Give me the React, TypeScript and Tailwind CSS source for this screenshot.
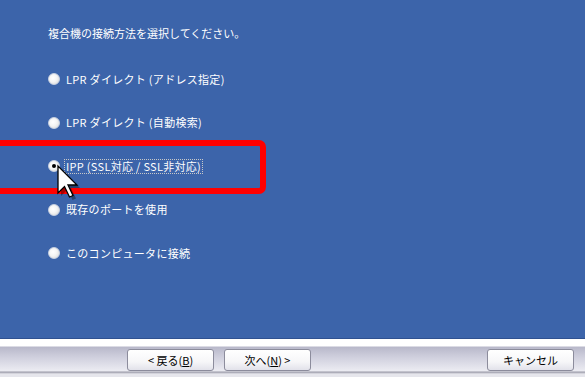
import React from "react";

const options = [
  { label: "LPR ダイレクト (アドレス指定)", checked: false },
  { label: "LPR ダイレクト (自動検索)", checked: false },
  { label: "IPP (SSL対応 / SSL非対応)", checked: true },
  { label: "既存のポートを使用", checked: false },
  { label: "このコンピュータに接続", checked: false },
];

function Radio({ checked }: { checked: boolean }) {
  return (
    <span className="relative flex h-[12px] w-[12px] shrink-0 items-center justify-center rounded-full border border-[#c9d2e2] bg-[radial-gradient(circle_at_40%_40%,#ffffff_0%,#f4f4f4_45%,#d4d4d4_100%)]">
      {checked && <span className="h-[4px] w-[4px] rounded-full bg-black" />}
    </span>
  );
}

function WizButton({ children, className = "" }: { children: React.ReactNode; className?: string }) {
  return (
    <button
      className={`flex h-[22px] w-[87px] items-center justify-center rounded-[3px] border border-[#8c8c9c] bg-[linear-gradient(to_bottom,#ffffff_0%,#f6f6f8_60%,#e2e2ea_100%)] text-[11px] leading-none text-black ${className}`}
    >
      {children}
    </button>
  );
}

function Cursor() {
  return (
    <svg width="26" height="38" viewBox="0 0 26 38" className="absolute left-[56px] top-[164px]">
      {/* shadow */}
      <path d="M5 5 L5 32 L11.5 25.5 L16.5 36 L20 34.5 L15 24 L24 24 Z" fill="#000" opacity="0.35" />
      <path
        d="M2 2 L2 29 L8.5 22.5 L13.5 33 L17 31.5 L12 21 L21 21 Z"
        fill="#fff"
        stroke="#000"
        strokeWidth="1.3"
        strokeLinejoin="miter"
      />
    </svg>
  );
}

export default function App() {
  return (
    <div className="relative flex h-[377px] w-[585px] flex-col overflow-hidden font-['Noto_Sans_CJK_JP','Noto_Sans',sans-serif]">
      <div className="relative flex-1 bg-[#3c64aa] pl-[48px] pt-[27px] text-white">
        <p className="text-[11px] leading-[12px]">複合機の接続方法を選択してください。</p>

        <div className="mt-[32px] flex flex-col gap-[27.5px]">
          {options.map((o) => (
            <div key={o.label} className="flex h-[16px] items-center gap-[4px]">
              <Radio checked={o.checked} />
              <span
                className={`text-[11px] leading-[13px] tracking-[0.3px] ${
                  o.checked ? "border border-dotted border-[#c8c8c8] px-[1px]" : "px-[2px]"
                }`}
              >
                {o.label}
              </span>
            </div>
          ))}
        </div>

        {/* red highlight frame */}
        <div className="absolute left-[-12px] top-[140px] h-[54px] w-[278px] rounded-[7px] border-[6px] border-[#ff0000]" />

        <Cursor />
      </div>

      <div className="h-px bg-[#2f5190]" />
      <div className="flex h-[38px] bg-[linear-gradient(to_bottom,#ffffff_0px,#ffffff_7px,#b8b8ca_8px,#cfcfdd_18px,#ececf2_32px,#9a9aa8_33px,#e6e6ec_35px)] pl-[127px] pr-[11px] pt-[10px]">
        <WizButton>
          &lt; 戻る(<u>B</u>)
        </WizButton>
        <WizButton className="ml-[10px]">
          次へ(<u>N</u>) &gt;
        </WizButton>
        <WizButton className="ml-auto">キャンセル</WizButton>
      </div>
    </div>
  );
}
